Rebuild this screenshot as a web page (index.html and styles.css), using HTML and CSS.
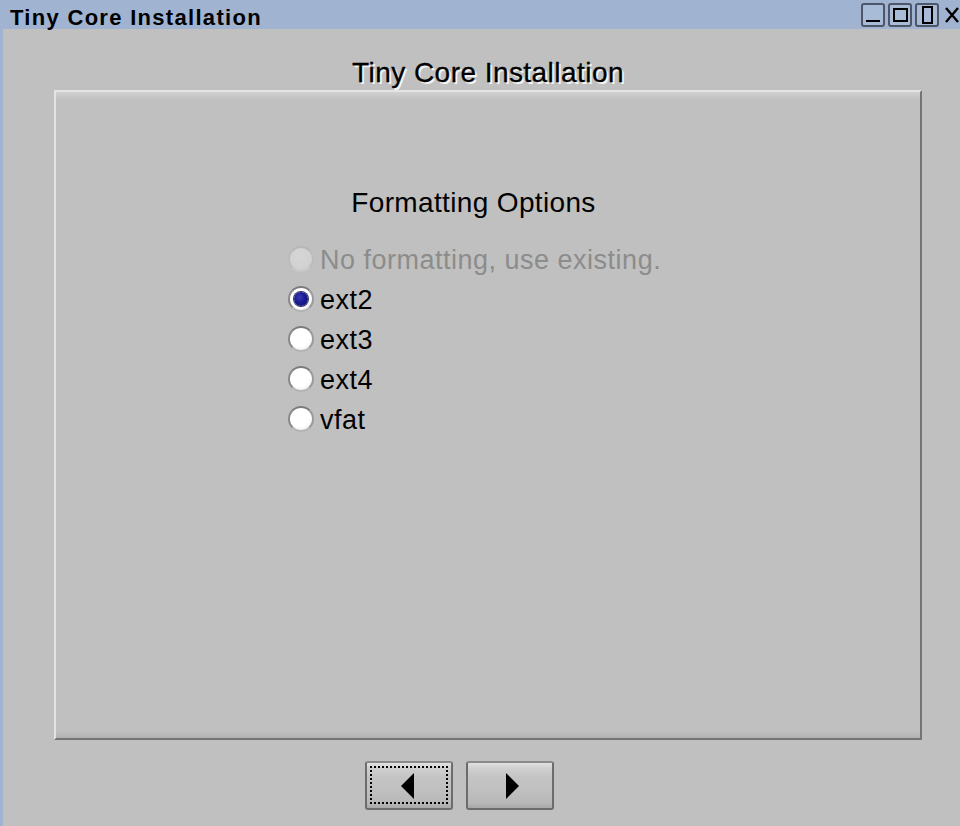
FILE: index.html
```html
<!DOCTYPE html>
<html>
<head>
<meta charset="utf-8">
<title>Tiny Core Installation</title>
<link rel="stylesheet" href="styles.css">
</head>
<body>
<div class="window">
  <div class="titlebar">
    <div class="title">Tiny Core Installation</div>
    <div class="wm-buttons">
      <div class="wm-btn"><svg width="20" height="20" viewBox="0 0 20 20"><rect x="3" y="15" width="14" height="2" fill="#000"/></svg></div>
      <div class="wm-btn"><svg width="20" height="20" viewBox="0 0 20 20"><rect x="4" y="4" width="13" height="12" fill="none" stroke="#000" stroke-width="2"/></svg></div>
      <div class="wm-btn"><svg width="20" height="20" viewBox="0 0 20 20"><rect x="6" y="2" width="9" height="16" fill="none" stroke="#000" stroke-width="2"/></svg></div>
      <div class="wm-btn close"><svg width="20" height="20" viewBox="0 0 20 20"><path d="M2 3 L14 17 M14 3 L2 17" stroke="#000" stroke-width="2.4" fill="none"/></svg></div>
    </div>
  </div>
  <div class="client">
    <h1 class="heading">Tiny Core Installation</h1>
    <div class="panel">
      <div class="options">
        <div class="options-title">Formatting Options</div>
        <div class="radio disabled"><span class="dot"></span><span class="label">No formatting, use existing.</span></div>
        <div class="radio checked"><span class="dot"></span><span class="label">ext2</span></div>
        <div class="radio"><span class="dot"></span><span class="label">ext3</span></div>
        <div class="radio"><span class="dot"></span><span class="label">ext4</span></div>
        <div class="radio"><span class="dot"></span><span class="label">vfat</span></div>
      </div>
    </div>
    <div class="nav">
      <button class="nav-btn focused"><span class="focus-ring"></span><span class="tri-left"></span></button>
      <button class="nav-btn"><span class="tri-right"></span></button>
    </div>
  </div>
</div>
</body>
</html>
```
FILE: styles.css
```css
html, body {
  margin: 0;
  padding: 0;
  background: #c0c0c0;
}
.window {
  width: 960px;
  height: 826px;
  display: flex;
  flex-direction: column;
  background: #c0c0c0;
  overflow: hidden;
  font-family: "Liberation Sans", Arial, sans-serif;
}
.titlebar {
  height: 29px;
  background: #a0b4d2;
  display: flex;
  align-items: flex-start;
  justify-content: space-between;
  flex: none;
}
.title {
  font-weight: bold;
  font-size: 22px;
  letter-spacing: 1.3px;
  line-height: 29px;
  padding-top: 3px;
  height: 26px;
  padding-left: 10px;
  color: #000;
}
.wm-buttons {
  display: flex;
  gap: 3px;
  padding-top: 3px;
  margin-right: -6px;
}
.wm-btn {
  width: 20px;
  height: 20px;
  border: 2px solid #4d5668;
  border-radius: 3px;
  background: #a8bbd7;
  display: flex;
  align-items: center;
  justify-content: center;
}
.wm-btn.close {
  border-color: #a0b4d2 transparent;
  background: transparent;
}
.client {
  flex: 1;
  border-left: 3px solid #a0b4d2;
  display: flex;
  flex-direction: column;
}
.heading {
  margin: 29px 0 2px 51px;
  width: 868px;
  text-align: center;
  font-size: 28px;
  font-weight: normal;
  line-height: 30px;
  color: #000;
  text-shadow: 2px 2px 0 #f4f4f4;
  letter-spacing: 0.45px;
  -webkit-text-stroke: 0.3px #000;
}
.panel {
  margin-left: 51px;
  width: 864px;
  height: 646px;
  border-top: 2px solid #e4e4e4;
  border-left: 2px solid #e4e4e4;
  border-right: 2px solid #747474;
  border-bottom: 2px solid #747474;
  background: linear-gradient(#d2d2d2 0, #c8c8c8 4px, #c0c0c0 8px, #c0c0c0 calc(100% - 7px), #b9b9b9 calc(100% - 3px), #b0b0b0 100%);
}
.options {
  margin-left: 232px;
  padding-top: 95px;
  width: 371px;
}
.options-title {
  font-size: 28px;
  line-height: 32px;
  text-align: center;
  color: #000;
  margin-bottom: 20px;
  letter-spacing: 0.35px;
}
.radio {
  height: 40px;
  display: flex;
  align-items: center;
  gap: 6px;
}
.label {
  font-size: 27px;
  line-height: 40px;
  color: #000;
  padding-top: 1px;
  letter-spacing: 0.5px;
  white-space: nowrap;
}
.dot {
  width: 22px;
  height: 22px;
  border-radius: 50%;
  border: 2px solid;
  border-color: #7c7c7c #9a9a9a #b4b4b4 #8a8a8a;
  background: radial-gradient(circle at 45% 42%, #ffffff 0, #ffffff 55%, #e6e6e6 85%, #d8d8d8 100%);
  position: relative;
  flex: none;
}
.radio.disabled .label {
  color: #8c8c8c;
}
.radio.disabled .dot {
  border-color: #b6b6b6 #bcbcbc #c8c8c8 #bcbcbc;
  background: radial-gradient(circle at 45% 42%, #d6d6d6 0, #d2d2d2 60%, #c8c8c8 100%);
}
.radio.checked .dot::after {
  content: "";
  position: absolute;
  left: 4px;
  top: 4px;
  width: 14px;
  height: 14px;
  border-radius: 50%;
  background: radial-gradient(circle at 40% 38%, #3a3ab0 0, #1c1c96 40%, #0e0e70 100%);
  box-shadow: 0 0 0 1px #303060;
}
.nav {
  display: flex;
  gap: 13px;
  margin-left: 362px;
  margin-top: 21px;
}
.nav-btn {
  position: relative;
  width: 88px;
  height: 49px;
  padding: 0;
  border: 2px solid #6c6c6c;
  border-top-color: #8a8a8a;
  border-radius: 3px;
  background: linear-gradient(#e2e2e2 0, #d0d0d0 5px, #c4c4c4 14px, #c0c0c0 60%, #b8b8b8 88%, #a8a8a8 100%);
  display: flex;
  align-items: center;
  justify-content: center;
}
.focus-ring {
  position: absolute;
  left: 3px;
  top: 3px;
  right: 3px;
  bottom: 4px;
  border: 2px dotted #000;
}
.tri-left {
  width: 0;
  height: 0;
  border-top: 13px solid transparent;
  border-bottom: 13px solid transparent;
  border-right: 13px solid #000;
  margin-left: -4px;
}
.tri-right {
  width: 0;
  height: 0;
  border-top: 13px solid transparent;
  border-bottom: 13px solid transparent;
  border-left: 13px solid #000;
  margin-left: 4px;
}
```
